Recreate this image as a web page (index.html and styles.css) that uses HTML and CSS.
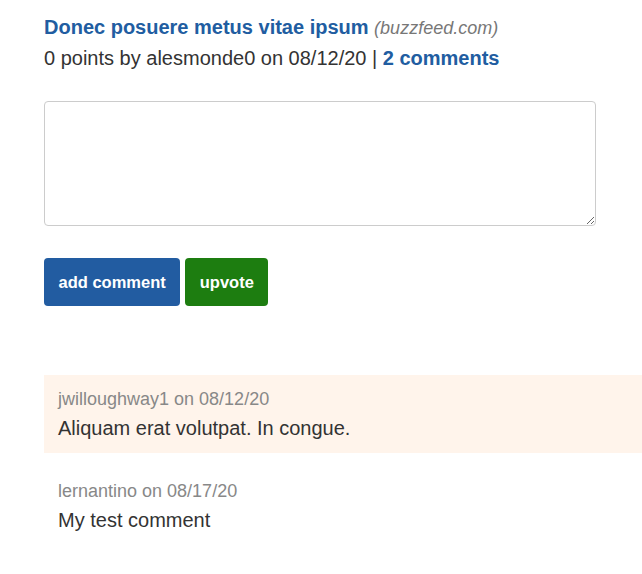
FILE: index.html
```html
<!DOCTYPE html>
<html lang="en">
<head>
<meta charset="utf-8">
<title>Donec posuere metus vitae ipsum</title>
<link rel="stylesheet" href="styles.css">
</head>
<body>
<main class="page">
  <section class="story">
    <div class="story-title">
      <a class="title-link" href="#">Donec posuere metus vitae ipsum</a>
      <span class="domain">(buzzfeed.com)</span>
    </div>
    <div class="story-meta">0 points by alesmonde0 on 08/12/20 | <a class="comments-link" href="#">2 comments</a></div>
  </section>

  <form class="comment-form">
    <textarea class="comment-input"></textarea>
    <div class="actions">
      <button type="button" class="btn btn-blue">add comment</button>
      <button type="button" class="btn btn-green">upvote</button>
    </div>
  </form>

  <section class="comments">
    <div class="comment comment-highlight">
      <div class="comment-meta">jwilloughway1 on 08/12/20</div>
      <div class="comment-body">Aliquam erat volutpat. In congue.</div>
    </div>
    <div class="comment">
      <div class="comment-meta">lernantino on 08/17/20</div>
      <div class="comment-body">My test comment</div>
    </div>
  </section>
</main>
</body>
</html>
```

FILE: styles.css
```css
html, body {
  margin: 0;
  padding: 0;
  background: #ffffff;
}

body {
  font-family: "Liberation Sans", Arial, sans-serif;
  font-size: 20px;
  line-height: 1.5;
  color: #333333;
}

.page {
  padding: 12px 0 0 44px;
}

.story-title {
  line-height: 30px;
}

.title-link {
  color: #215da1;
  font-weight: bold;
  text-decoration: none;
}

.domain {
  font-style: italic;
  font-size: 18px;
  color: #777777;
}

.story-meta {
  line-height: 30px;
}

.comments-link {
  color: #215da1;
  font-weight: bold;
  text-decoration: none;
}

.comment-form {
  margin-top: 28px;
}

.comment-input {
  display: block;
  box-sizing: border-box;
  width: 552px;
  height: 125px;
  margin: 0;
  border: 1px solid #cccccc;
  border-radius: 4px;
  padding: 8px;
  font-family: inherit;
  font-size: 18px;
  resize: both;
}

.actions {
  display: flex;
  gap: 5px;
  margin-top: 32px;
}

.btn {
  height: 48px;
  padding: 0 14.5px;
  border: none;
  border-radius: 4px;
  font-family: "Liberation Sans", Arial, sans-serif;
  font-weight: bold;
  font-size: 16.5px;
  color: #ffffff;
  cursor: pointer;
}

.btn-blue {
  background: #225ca1;
}

.btn-green {
  background: #1d7d10;
}

.comments {
  margin-top: 69px;
  display: flex;
  flex-direction: column;
  gap: 14px;
}

.comment {
  padding: 11px 14px 10px;
}

.comment-highlight {
  background: #fff4eb;
}

.comment-meta {
  font-size: 18px;
  line-height: 27px;
  color: #888888;
}

.comment-body {
  font-size: 20px;
  line-height: 30px;
  color: #333333;
}
```
